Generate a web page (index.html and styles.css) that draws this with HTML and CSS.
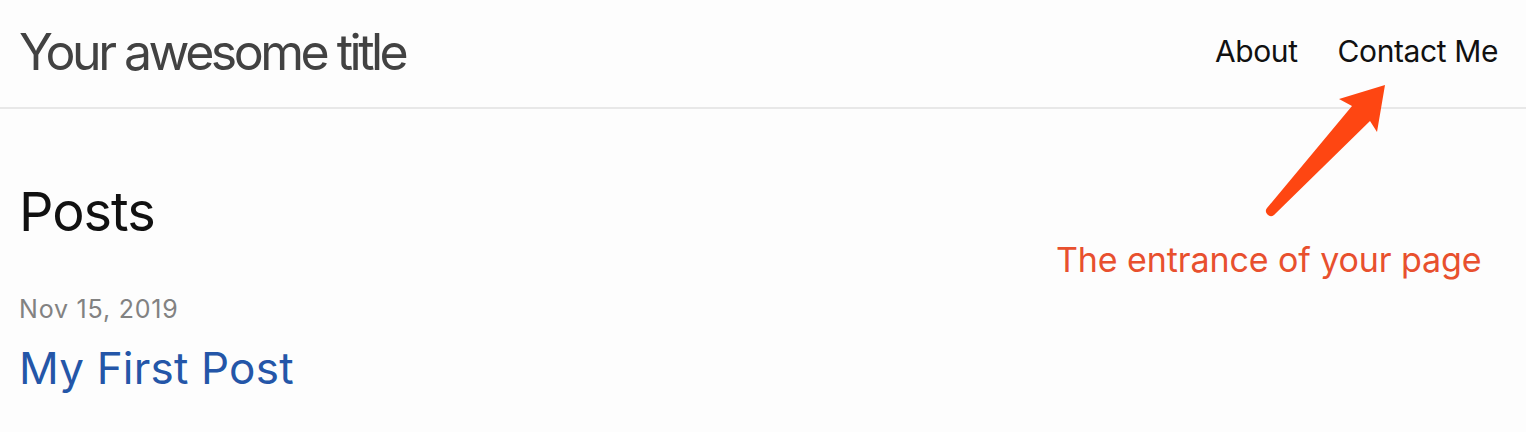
FILE: index.html
```html
<!DOCTYPE html>
<html>
<head>
<meta charset="utf-8">
<link rel="stylesheet" href="styles.css">
</head>
<body>
<header class="site-header">
  <a class="site-title" href="#">Your awesome title</a>
  <nav class="site-nav">
    <a class="page-link" href="#">About</a>
    <a class="page-link" href="#">Contact Me</a>
  </nav>
</header>
<main class="page-content">
  <h2 class="post-list-heading">Posts</h2>
  <div class="post-item">
    <span class="post-meta">Nov 15, 2019</span>
    <a class="post-link" href="#">My First Post</a>
  </div>
</main>
<div class="annotation">
  <svg class="arrow" width="140" height="150" viewBox="0 0 140 150">
    <path d="M130 10 L84 24 L97 31 L12 133 A5 5 0 0 0 19 140 L115 46 L122 57 Z" fill="#fe4612"/>
  </svg>
  <span class="annotation-text">The entrance of your page</span>
</div>
</body>
</html>
```
FILE: styles.css
```css
* { box-sizing: border-box; }
html, body { margin: 0; padding: 0; }
body {
  background: #fdfdfd;
  font-family: Inter, "Noto Sans", sans-serif;
  color: #111;
  width: 1526px;
  height: 432px;
  overflow: hidden;
  position: relative;
}
a { text-decoration: none; }
.site-header {
  height: 109px;
  border-bottom: 2px solid #e8e8e8;
  display: flex;
  justify-content: space-between;
  align-items: flex-start;
  padding: 0 28px 0 19px;
}
.site-title {
  font-size: 50px;
  letter-spacing: -3.5px;
  color: #424242;
  line-height: 1;
  margin-top: 27px;
}
.site-nav {
  display: flex;
  gap: 40px;
  margin-top: 36px;
}
.page-link {
  color: #111;
  font-size: 30px;
  letter-spacing: -0.4px;
  line-height: 1;
}
.page-content {
  padding: 0 19px;
}
.post-list-heading {
  font-size: 54px;
  font-weight: 400;
  letter-spacing: -1px;
  margin: 76px 0 0 0;
  line-height: 1;
  color: #111;
}
.post-item { display: flex; flex-direction: column; margin-top: 58px; }
.post-meta {
  font-size: 25px;
  letter-spacing: 0.8px;
  color: #828282;
  line-height: 1;
}
.post-link {
  font-size: 44px;
  letter-spacing: 0.2px;
  color: #2456a8;
  line-height: 1;
  margin-top: 24px;
}
.annotation {
  position: absolute;
  left: 1055px;
  top: 75px;
  width: 440px;
  height: 210px;
}
.arrow {
  position: absolute;
  left: 200px;
  top: 0;
}
.annotation-text {
  position: absolute;
  left: 1px;
  top: 168px;
  font-size: 34px;
  letter-spacing: -0.1px;
  color: #e8502e;
  line-height: 1;
  white-space: nowrap;
}
```
